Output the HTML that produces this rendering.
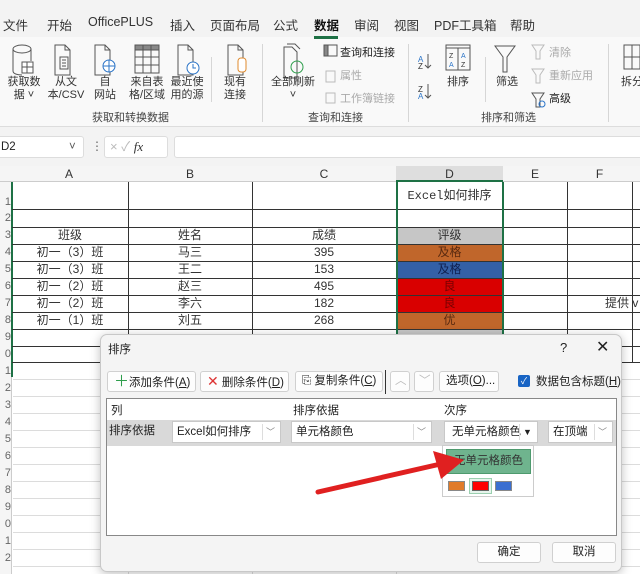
<!DOCTYPE html>
<html><head><meta charset="utf-8">
<style>
*{margin:0;padding:0;box-sizing:border-box}
body{width:640px;height:574px;overflow:hidden;position:relative;background:#fff;font-family:"Liberation Sans","Noto Sans CJK SC",sans-serif;font-size:12px;color:#222}
.a{position:absolute;white-space:nowrap}
.tab{position:absolute;top:15px;font-size:12.5px;color:#333}
.lbl{position:absolute;font-size:11px;color:#333;text-align:center;line-height:13px}
.gl{position:absolute;font-size:11px;color:#444;top:109px}
.vs{position:absolute;width:1px;background:#d6d6d6}
.cell{position:absolute;text-align:center;font-size:12px;color:#333;line-height:17px}
.h{position:absolute;height:1px;background:#333}
.v{position:absolute;width:1px;background:#333}
.btn{position:absolute;height:21px;border:1px solid #d0d0d0;border-radius:3px;background:#fdfdfd;font-size:11.5px;line-height:19px;padding-left:6px}
.cb{position:absolute;height:22px;border:1px solid #c8c8c8;background:#fff;font-size:11.5px;line-height:20px;padding-left:4px}
.dd{position:absolute;right:2px;top:2px;width:16px;height:16px;border-left:1px solid #ddd;color:#888;font-size:9px;text-align:center;line-height:16px}
.rn{position:absolute;left:-3px;width:14px;font-size:11px;color:#666;line-height:17px;text-align:right}
</style></head><body>
<div class="a" style="left:0;top:0;width:640px;height:128px;background:#f3f3f3"></div>
<div class="a" style="left:0;top:37px;width:640px;height:90px;background:#f9f9f9;border-bottom:1px solid #ddd"></div>
<div class="tab" style="left:3px">文件</div>
<div class="tab" style="left:47px">开始</div>
<div class="tab" style="left:88px">OfficePLUS</div>
<div class="tab" style="left:170px">插入</div>
<div class="tab" style="left:210px">页面布局</div>
<div class="tab" style="left:273px">公式</div>
<div class="tab" style="left:314px;font-weight:bold;color:#111">数据</div>
<div class="a" style="left:314px;top:36px;width:24px;height:3px;background:#1e7145"></div>
<div class="tab" style="left:354px">审阅</div>
<div class="tab" style="left:394px">视图</div>
<div class="tab" style="left:434px">PDF工具箱</div>
<div class="tab" style="left:510px">帮助</div>

<svg class="a" style="left:0;top:40px" width="640" height="70" viewBox="0 0 640 70" fill="none" stroke="#555" stroke-width="1">
<ellipse cx="22" cy="9" rx="9" ry="4"/><path d="M13 9v22c0 3 5 4 9 4M31 9v12"/><rect x="22" y="22" width="11" height="11" fill="#fff"/><path d="M22 27h11M27 22v11"/>
<path d="M55 5h10l5 5v25H55z M65 5v5h5"/><rect x="60" y="17" width="8" height="12"/><path d="M62 20h4M62 23h4M62 26h4"/>
<path d="M95 5h10l5 5v25H95z M105 5v5h5"/><circle cx="109" cy="26" r="6" stroke="#2b74c7" fill="#fff"/><path d="M103 26h12M109 20v12" stroke="#2b74c7"/>
<rect x="135" y="5" width="24" height="28"/><rect x="135" y="5" width="24" height="5" fill="#888"/><path d="M135 17h24M135 25h24M143 5v28M151 5v28"/>
<path d="M178 5h10l5 5v25H178z M188 5v5h5"/><circle cx="193" cy="28" r="6" stroke="#2b74c7" fill="#fff"/><path d="M193 24v4h3" stroke="#2b74c7"/>
<path d="M228 5h10l5 5v25H228z M238 5v5h5"/><rect x="238" y="18" width="8" height="14" rx="3" stroke="#e08a2c" fill="#fff"/>
<path d="M284 7h8l5 5v26H284z M287 4h8l5 5" /><circle cx="297" cy="27" r="6" stroke="#2e9e4c"/>
<rect x="324" y="5" width="13" height="11"/><rect x="324" y="5" width="4" height="11" fill="#888"/>
<rect x="326" y="31" width="9" height="11" stroke="#bbb"/><rect x="326" y="53" width="9" height="10" stroke="#bbb"/>
<text x="418" y="22" font-size="8" fill="#2b74c7" stroke="none" font-family="Liberation Sans">A</text><text x="418" y="29" font-size="8" fill="#333" stroke="none" font-family="Liberation Sans">Z</text><path d="M428 14v14M425 25l3 3 3-3"/>
<text x="418" y="52" font-size="8" fill="#333" stroke="none" font-family="Liberation Sans">Z</text><text x="418" y="59" font-size="8" fill="#2b74c7" stroke="none" font-family="Liberation Sans">A</text><path d="M428 44v14M425 55l3 3 3-3"/>
<rect x="446" y="5" width="24" height="25"/><path d="M446 8h24M458 8v22"/>
<text x="449" y="18" font-size="7" fill="#333" stroke="none">Z</text><text x="449" y="27" font-size="7" fill="#2b74c7" stroke="none">A</text><text x="461" y="18" font-size="7" fill="#2b74c7" stroke="none">A</text><text x="461" y="27" font-size="7" fill="#333" stroke="none">Z</text>
<path d="M495 6h20l-8 11v15h-4V17z"/>
<path d="M532 5h12l-4 6v8h-4v-8z" stroke="#bbb"/><path d="M532 29h12l-4 6v8h-4v-8z" stroke="#bbb"/><path d="M532 53h12l-4 6v8h-4v-8z"/><circle cx="542" cy="64" r="3" stroke="#2b74c7"/>
<rect x="624" y="5" width="16" height="24"/><path d="M624 17h16M632 5v24"/>
</svg>
<div class="lbl" style="left:4px;top:76px;width:40px">获取数<br>据 ˅</div>
<div class="lbl" style="left:46px;top:76px;width:40px">从文<br>本/CSV</div>
<div class="lbl" style="left:90px;top:76px;width:30px">自<br>网站</div>
<div class="lbl" style="left:125px;top:76px;width:44px">来自表<br>格/区域</div>
<div class="lbl" style="left:167px;top:76px;width:40px">最近使<br>用的源</div>
<div class="lbl" style="left:218px;top:76px;width:34px">现有<br>连接</div>
<div class="vs" style="left:211px;top:57px;height:45px"></div>
<div class="lbl" style="left:268px;top:76px;width:50px">全部刷新<br>˅</div>
<div class="a" style="left:340px;top:44px;font-size:11px">查询和连接</div>
<div class="a" style="left:340px;top:67px;font-size:11px;color:#aaa">属性</div>
<div class="a" style="left:340px;top:90px;font-size:11px;color:#aaa">工作簿链接</div>
<div class="lbl" style="left:444px;top:76px;width:28px">排序</div>
<div class="vs" style="left:485px;top:57px;height:45px"></div>
<div class="lbl" style="left:493px;top:76px;width:28px">筛选</div>
<div class="a" style="left:549px;top:44px;font-size:11px;color:#aaa">清除</div>
<div class="a" style="left:549px;top:67px;font-size:11px;color:#aaa">重新应用</div>
<div class="a" style="left:549px;top:90px;font-size:11px">高级</div>
<div class="lbl" style="left:617px;top:76px;width:30px">拆分</div>
<div class="gl" style="left:92px">获取和转换数据</div>
<div class="gl" style="left:308px">查询和连接</div>
<div class="gl" style="left:481px">排序和筛选</div>
<div class="vs" style="left:262px;top:44px;height:78px"></div>
<div class="vs" style="left:408px;top:44px;height:78px"></div>
<div class="vs" style="left:608px;top:44px;height:78px"></div>

<div class="a" style="left:0;top:128px;width:640px;height:38px;background:#f3f3f3"></div>
<div class="a" style="left:-4px;top:136px;width:88px;height:22px;background:#fff;border:1px solid #ddd;border-radius:3px;padding-left:4px;line-height:20px;font-size:11.5px">D2<span style="position:absolute;left:72px;color:#555">˅</span></div>
<div class="a" style="left:91px;top:139px;color:#666">⋮</div>
<div class="a" style="left:104px;top:136px;width:64px;height:22px;background:#fff;border:1px solid #ddd;border-radius:3px;line-height:20px;color:#bbb;font-size:13px;padding-left:5px">× ✓ <i style="color:#333;font-family:'Liberation Serif',serif">fx</i></div>
<div class="a" style="left:174px;top:136px;width:470px;height:22px;background:#fff;border:1px solid #ddd;border-radius:3px"></div>

<div class="a" style="left:0;top:166px;width:640px;height:16px;background:#f5f5f5;border-bottom:1px solid #ccc"></div>
<div class="a" style="left:396px;top:166px;width:107px;height:16px;background:#dedede;border-bottom:2px solid #1e7145"></div>
<div class="cell" style="left:10px;top:166px;width:118px;line-height:16px">A</div>
<div class="cell" style="left:128px;top:166px;width:124px;line-height:16px">B</div>
<div class="cell" style="left:252px;top:166px;width:144px;line-height:16px">C</div>
<div class="cell" style="left:396px;top:166px;width:107px;line-height:16px">D</div>
<div class="cell" style="left:503px;top:166px;width:64px;line-height:16px">E</div>
<div class="cell" style="left:567px;top:166px;width:65px;line-height:16px">F</div>
<div class="a" style="left:0;top:182px;width:12px;height:392px;background:#f5f5f5;border-right:1px solid #ccc;overflow:hidden">
<div class="rn" style="top:12px">1</div><div class="rn" style="top:28px">2</div><div class="rn" style="top:45px">3</div><div class="rn" style="top:62px">4</div><div class="rn" style="top:79px">5</div><div class="rn" style="top:96px">6</div><div class="rn" style="top:113px">7</div><div class="rn" style="top:130px">8</div><div class="rn" style="top:147px">9</div><div class="rn" style="top:164px">0</div><div class="rn" style="top:181px">1</div><div class="rn" style="top:198px">2</div><div class="rn" style="top:215px">3</div><div class="rn" style="top:232px">4</div><div class="rn" style="top:249px">5</div><div class="rn" style="top:266px">6</div><div class="rn" style="top:283px">7</div><div class="rn" style="top:300px">8</div><div class="rn" style="top:317px">9</div><div class="rn" style="top:334px">0</div><div class="rn" style="top:351px">1</div><div class="rn" style="top:368px">2</div>
</div>
<div class="a" style="left:11px;top:182px;width:2px;height:195px;background:#1e7145"></div>
<div class="a" style="left:13px;top:363px;width:627px;height:211px;background:repeating-linear-gradient(to bottom,#fff 0 16px,#dcdcdc 16px 17px)"></div>
<div class="a" style="left:128px;top:363px;width:1px;height:211px;background:#dcdcdc"></div>
<div class="a" style="left:252px;top:363px;width:1px;height:211px;background:#dcdcdc"></div>
<div class="a" style="left:396px;top:363px;width:1px;height:211px;background:#dcdcdc"></div>
<div class="a" style="left:396px;top:227px;width:107px;height:17px;background:#c6c6c6"></div>
<div class="a" style="left:396px;top:244px;width:107px;height:17px;background:#c0662b"></div>
<div class="a" style="left:396px;top:261px;width:107px;height:17px;background:#3460a6"></div>
<div class="a" style="left:396px;top:278px;width:107px;height:34px;background:#d90000"></div>
<div class="a" style="left:396px;top:312px;width:107px;height:17px;background:#c0662b"></div>
<div class="a" style="left:396px;top:329px;width:107px;height:5px;background:#c6c6c6"></div>
<div class="h" style="left:12px;top:209px;width:628px"></div>
<div class="h" style="left:12px;top:227px;width:628px"></div>
<div class="h" style="left:12px;top:244px;width:628px"></div>
<div class="h" style="left:12px;top:261px;width:628px"></div>
<div class="h" style="left:12px;top:278px;width:628px"></div>
<div class="h" style="left:12px;top:295px;width:628px"></div>
<div class="h" style="left:12px;top:312px;width:628px"></div>
<div class="h" style="left:12px;top:329px;width:628px"></div>
<div class="h" style="left:12px;top:346px;width:628px"></div>
<div class="h" style="left:12px;top:362px;width:628px"></div>
<div class="v" style="left:128px;top:182px;height:181px"></div>
<div class="v" style="left:252px;top:182px;height:181px"></div>
<div class="v" style="left:567px;top:182px;height:181px"></div>
<div class="v" style="left:632px;top:182px;height:181px"></div>
<div class="a" style="left:396px;top:182px;width:2px;height:160px;background:#1e7145"></div>
<div class="a" style="left:502px;top:182px;width:2px;height:160px;background:#1e7145"></div>
<div class="cell" style="left:396px;top:188px;width:107px;font-family:'Liberation Mono','Noto Sans CJK SC',monospace">Excel如何排序</div>
<div class="cell" style="left:12px;top:227px;width:116px">班级</div>
<div class="cell" style="left:128px;top:227px;width:124px">姓名</div>
<div class="cell" style="left:252px;top:227px;width:144px">成绩</div>
<div class="cell" style="left:396px;top:227px;width:107px">评级</div>
<div class="cell" style="left:12px;top:244px;width:116px">初一（3）班</div>
<div class="cell" style="left:12px;top:261px;width:116px">初一（3）班</div>
<div class="cell" style="left:12px;top:278px;width:116px">初一（2）班</div>
<div class="cell" style="left:12px;top:295px;width:116px">初一（2）班</div>
<div class="cell" style="left:12px;top:312px;width:116px">初一（1）班</div>
<div class="cell" style="left:128px;top:244px;width:124px">马三</div>
<div class="cell" style="left:128px;top:261px;width:124px">王二</div>
<div class="cell" style="left:128px;top:278px;width:124px">赵三</div>
<div class="cell" style="left:128px;top:295px;width:124px">李六</div>
<div class="cell" style="left:128px;top:312px;width:124px">刘五</div>
<div class="cell" style="left:252px;top:244px;width:144px">395</div>
<div class="cell" style="left:252px;top:261px;width:144px">153</div>
<div class="cell" style="left:252px;top:278px;width:144px">495</div>
<div class="cell" style="left:252px;top:295px;width:144px">182</div>
<div class="cell" style="left:252px;top:312px;width:144px">268</div>
<div class="cell" style="left:396px;top:244px;width:107px;color:#5a2a10">及格</div>
<div class="cell" style="left:396px;top:261px;width:107px;color:#102050">及格</div>
<div class="cell" style="left:396px;top:278px;width:107px;color:#7a0000">良</div>
<div class="cell" style="left:396px;top:295px;width:107px;color:#7a0000">良</div>
<div class="cell" style="left:396px;top:312px;width:107px;color:#5a2a10">优</div>
<div class="cell" style="left:605px;top:295px;text-align:left">提供 v</div>

<div class="a" style="left:100px;top:334px;width:522px;height:238px;background:#f4f4f4;border:1px solid #c8c8c8;border-radius:7px;box-shadow:0 2px 10px rgba(0,0,0,.25)"></div>
<div class="a" style="left:108px;top:341px;font-size:11.5px">排序</div>
<div class="a" style="left:560px;top:340px;font-size:13px">?</div>
<div class="a" style="left:596px;top:337px;font-size:16px">✕</div>
<div class="btn" style="left:107px;top:371px;width:89px"><span style="color:#2e9e4c;font-size:15px">＋</span>添加条件(<u>A</u>)</div>
<div class="btn" style="left:200px;top:371px;width:89px"><span style="color:#d33;font-size:14px">✕</span> 删除条件(<u>D</u>)</div>
<div class="btn" style="left:295px;top:371px;width:88px">⎘ 复制条件(<u>C</u>)</div>
<div class="a" style="left:385px;top:370px;width:1px;height:24px;background:#333"></div>
<div class="btn" style="left:390px;top:371px;width:20px;color:#bbb;padding-left:4px">︿</div>
<div class="btn" style="left:414px;top:371px;width:20px;color:#bbb;padding-left:4px">﹀</div>
<div class="btn" style="left:439px;top:371px;width:60px">选项(<u>O</u>)...</div>
<div class="a" style="left:518px;top:375px;width:12px;height:12px;background:#1864c4;border-radius:2px;color:#fff;font-size:9px;line-height:12px;text-align:center">✓</div>
<div class="a" style="left:536px;top:373px;font-size:11.5px">数据包含标题(<u>H</u>)</div>
<div class="a" style="left:106px;top:398px;width:511px;height:138px;background:#fff;border:1px solid #888"></div>
<div class="a" style="left:111px;top:402px;font-size:11.5px">列</div>
<div class="a" style="left:293px;top:402px;font-size:11.5px">排序依据</div>
<div class="a" style="left:444px;top:402px;font-size:11.5px">次序</div>
<div class="a" style="left:107px;top:420px;width:509px;height:26px;background:#d9d9d9"></div>
<div class="a" style="left:109px;top:422px;font-size:11.5px">排序依据</div>
<div class="cb" style="left:172px;top:421px;width:109px">Excel如何排序<div class="dd">﹀</div></div>
<div class="cb" style="left:291px;top:421px;width:141px">单元格颜色<div class="dd">﹀</div></div>
<div class="cb" style="left:444px;top:421px;width:94px;padding-left:7px">无单元格颜色<div class="dd" style="color:#222">▼</div></div>
<div class="cb" style="left:548px;top:421px;width:65px">在顶端<div class="dd">﹀</div></div>
<div class="a" style="left:442px;top:445px;width:92px;height:52px;background:#fff;border:1px solid #ccc"></div>
<div class="a" style="left:446px;top:449px;width:85px;height:25px;background:#6fb48e;border:1px solid #4e9a6e;font-size:11.5px;line-height:23px;text-align:center;color:#333">无单元格颜色</div>
<div class="a" style="left:448px;top:481px;width:17px;height:10px;background:#e07b2a;border:1px solid #888"></div>
<div class="a" style="left:469px;top:478px;width:23px;height:16px;border:1px solid #9bd0b0;background:#e6f4ec"></div>
<div class="a" style="left:472px;top:481px;width:17px;height:10px;background:#ff0000;border:1px solid #666"></div>
<div class="a" style="left:495px;top:481px;width:17px;height:10px;background:#3b6fd0;border:1px solid #888"></div>
<svg class="a" style="left:0;top:0" width="640" height="574"><path d="M318 492 L445 463" stroke="#e02020" stroke-width="5" stroke-linecap="round"/><path d="M433 451 L464 460 L441 479 Z" fill="#e02020"/></svg>
<div class="btn" style="left:477px;top:542px;width:64px;text-align:center;padding:0">确定</div>
<div class="btn" style="left:552px;top:542px;width:64px;text-align:center;padding:0">取消</div>
</body></html>
